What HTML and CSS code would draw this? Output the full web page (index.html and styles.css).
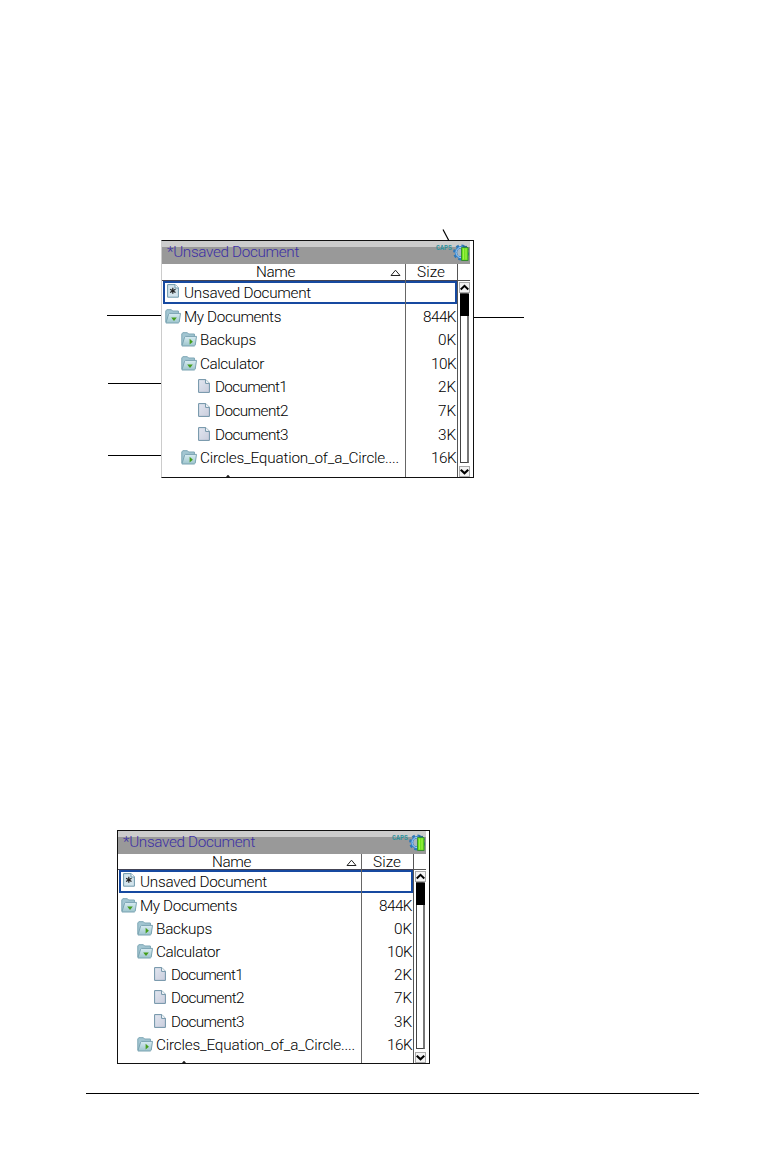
FILE: index.html
```html
<!DOCTYPE html>
<html lang="en">
<head>
<meta charset="utf-8">
<title>Unsaved Document</title>
<link rel="stylesheet" href="styles.css">
</head>
<body>
<svg class="defs" width="0" height="0" aria-hidden="true">
  <defs>
    <linearGradient id="fold" x1="0" y1="0" x2="0" y2="1"><stop offset="0" stop-color="#d9ecf2"/><stop offset="1" stop-color="#9cc4cc"/></linearGradient>
    <linearGradient id="paper" x1="0" y1="0" x2="1" y2="1"><stop offset="0" stop-color="#e2e6f0"/><stop offset="1" stop-color="#c9cddc"/></linearGradient>
    <symbol id="folder" viewBox="0 0 16 15">
      <path d="M.8 13V2L1.8.7h4.6l1.2 1.3h5.8v2.6" fill="#a3c6d2" stroke="#7ca5b4"/>
      <path d="M.9 14 3.6 5.2l.9-.8h11l-1.3 8.8-.9.8z" fill="url(#fold)" stroke="#7aa3b2"/>
    </symbol>
    <symbol id="open" viewBox="0 0 16 15"><use href="#folder"/><path d="M6.2 8.6h5.6L9 12z" fill="#449d1a"/></symbol>
    <symbol id="closed" viewBox="0 0 16 15"><use href="#folder"/><path d="M8.6 6.8v5.8l3.3-2.9z" fill="#449d1a"/></symbol>
    <symbol id="doc" viewBox="0 0 12 14">
      <path d="M.6.6h7.2l3.6 3.6v9.2H.6z" fill="url(#paper)" stroke="#6f92a6"/>
      <path d="M7.6.6v3.8h3.8" fill="#fff" stroke="#6f92a6"/>
    </symbol>
    <symbol id="unsaved" viewBox="0 0 12 14">
      <path d="M.6.6h7.6l3.2 3.2v9.4H.6z" fill="#d3e4ec" stroke="#6e99ac"/>
      <path d="M8 .6v3.4h3.4" fill="#fff" stroke="#6e99ac"/>
      <path d="M5.8 3.8v6M3.1 5.2l5.4 3.2M8.5 5.2 3.1 8.4" stroke="#222" stroke-width="1.2"/>
    </symbol>
    <symbol id="status" viewBox="0 0 16 18">
      <circle cx="8.2" cy="8.5" r="7" fill="none" stroke="#2e78b8" stroke-width="2.2" stroke-dasharray="2.9 2.6"/>
      <circle cx="8.2" cy="8.5" r="5.2" fill="#a9b6c0" stroke="#2f7cc4" stroke-width="2.4"/>
      <circle cx="8.2" cy="8.5" r="5.2" fill="none" stroke="#a5d6ff" stroke-width="1"/>
      <path d="M8.5 4.5v-1h6.6v13H8.5z" fill="#6be11c" stroke="#2f8a2a" stroke-width=".9"/>
      <path d="M10.6 4.5v11M13 4.5v11" stroke="#a8f250"/>
      <path d="M10 2.6h4" stroke="#2a6f86" stroke-width="1.4"/>
    </symbol>
    <symbol id="up" viewBox="0 0 10 10"><path d="M.8 7.2 5 3.2 9.2 7.2" fill="none" stroke="#000" stroke-width="2.2"/></symbol>
    <symbol id="down" viewBox="0 0 10 10"><path d="M.8 3 5 7 9.2 3" fill="none" stroke="#000" stroke-width="2.5"/></symbol>
  </defs>
</svg>
<main class="page">
  <figure class="figure figure-first">
    <div class="screen"></div>
    <i class="line line-a"></i><i class="line line-b"></i><i class="line line-c"></i><i class="line line-d"></i>
    <svg class="pointer" width="8" height="12" viewBox="0 0 8 12"><path d="M1 .5 6.8 11.5" stroke="#000" stroke-width="1.2"/></svg>
  </figure>
  <figure class="figure figure-second"><div class="screen"></div></figure>
  <hr class="rule">
</main>
<script src="screen.js"></script>
</body>
</html>
```
FILE: styles.css
```css
* { box-sizing: border-box; }
body { margin: 0; background: #fff; }
.defs { position: absolute; }
.page { width: 764px; height: 1160px; overflow: hidden; display: flex; flex-direction: column; }
.figure { margin: 0; position: relative; width: 313px; flex: none; }
.figure-first { --row: 23.55px; --head: 17px; height: 238px; margin: 240px 0 0 161px; }
.figure-second { --row: 23.2px; --head: 16px; height: 234px; margin: 352px 0 0 117px; }
.rule { margin: 29px 65px 0 86px; border: 0; height: 1px; background: #000; flex: none; }
.screen { height: 100%; border: 1px solid #111; display: flex; flex-direction: column; overflow: hidden; font: 300 15.3px/20px Roboto, "Liberation Sans", sans-serif; color: #000; }
.figure-first .screen { border-left-color: #ccc; }
.titlebar { height: 23px; flex: none; margin-right: 3px; padding: 0 1px 0 5px; display: flex; background: linear-gradient(#ccc 6px, #999 6px); color: #3c2fa5; }
.title { flex: 1; padding-top: 1px; }
.caps { font: 700 6.5px/7px "Liberation Mono", monospace; letter-spacing: .1px; color: #2f929c; padding-top: 4px; margin-right: 1px; }
.status { width: 16px; height: 18px; margin-top: 3px; }
.body { flex: 1; min-height: 0; display: flex; }
.table { width: 296px; flex: none; position: relative; border-right: 1px solid #555; }
.head { height: var(--head); display: grid; grid-template-columns: 243px 52px; border-bottom: 1px solid #445; line-height: 16px; }
.head-name { display: flex; padding-left: 94px; }
.sort { margin: 5px 0 0 auto; margin-right: 4px; width: 11px; height: 8px; }
.head-size { padding-left: 12px; }
.row { height: var(--row); display: flex; align-items: center; padding: 2px 1px 0 3px; }
.row.selected { height: 23px; margin-left: 1px; border: 2px solid #1649a0; padding: 1px 0 0 2px; }
.icon { flex: none; width: 16px; height: 15px; margin-right: 3px; margin-top: -1px; }
.icon.doc { width: 12px; height: 14px; margin-right: 5px; margin-top: -2px; }
.icon.unsaved { width: 12px; height: 14px; margin-right: 5px; margin-top: -4px; }
.row.level-1 { padding-left: 19px; }
.row.level-2 { padding-left: 36px; }
.name { flex: 1; white-space: nowrap; }
.divider { position: absolute; left: 243px; top: 0; bottom: 0; width: 1px; background: #666; }
.t { display: inline-block; white-space: nowrap; }
.scroll { width: 12px; display: flex; flex-direction: column; align-items: center; }
.corner { width: 12px; height: var(--head); flex: none; border-bottom: 1px solid #555; }
.button { width: 11px; height: 11px; flex: none; border: 1px solid #aaa; background: #f3f3f3; margin-top: 1px; }
.button svg { display: block; width: 9px; height: 9px; }
.track { flex: 1; width: 9px; margin: 0 0 2px; border: 1px solid #444; border-right: 2px solid #777; }
.thumb { width: 9px; height: 22px; margin: 0 -1px; background: #000; }
.peek { width: 4px; height: 2px; margin-left: 64px; background: #222; clip-path: polygon(40% 0, 60% 0, 100% 100%, 0 100%); position: absolute; bottom: 0; }
.line { position: absolute; height: 1px; background: #000; }
.line-a { left: -54px; top: 75px; width: 54px; }
.line-b { left: -53px; top: 143px; width: 53px; }
.line-c { left: -53px; top: 215px; width: 53px; }
.line-d { left: 313px; top: 77px; width: 50px; }
.pointer { position: absolute; left: 281px; top: -11px; }
```
FILE: screen.js
```js
// Each entry: icon, indent level, label, label width in px, size, size width in px.
const rows = [
  ['unsaved', 0, 'Unsaved Document', 127, '', 0],
  ['open', 0, 'My Documents', 97, '844K', 33],
  ['closed', 1, 'Backups', 56, '0K', 18],
  ['open', 1, 'Calculator', 64, '10K', 25],
  ['doc', 2, 'Document1', 72, '2K', 18],
  ['doc', 2, 'Document2', 73, '7K', 18],
  ['doc', 2, 'Document3', 73, '3K', 18],
  ['closed', 1, 'Circles_Equation_of_a_Circle....', 199, '16K', 25],
];
const icon = (id, cls) => `<svg class="${cls}"><use href="#${id}"/></svg>`;
const text = (s, w) => `<span class="t" data-w="${w}">${s}</span>`;

const html = `
<div class="titlebar"><span class="title">${text('*Unsaved Document', 132)}</span><span class="caps">CAPS</span>${icon('status', 'status')}</div>
<div class="body">
  <div class="table">
    <div class="head"><div class="head-name">${text('Name', 39)}
      <svg class="sort" viewBox="0 0 11 8"><path d="M1 6.5h9L5.5 1.2z" fill="#fff" stroke="#222"/></svg></div>
      <div class="head-size">${text('Size', 28)}</div></div>
    ${rows.map((r, i) => `<div class="row level-${r[1]} ${i ? '' : 'selected'}">${icon(r[0], 'icon ' + r[0])}<span class="name">${text(r[2], r[3])}</span>${r[4] ? text(r[4], r[5]) : ''}</div>`).join('')}
    <i class="divider"></i><i class="peek"></i>
  </div>
  <div class="scroll"><div class="corner"></div>
    <div class="button">${icon('up', '')}</div>
    <div class="track"><div class="thumb"></div></div>
    <div class="button">${icon('down', '')}</div>
  </div>
</div>`;
document.querySelectorAll('.screen').forEach(el => { el.innerHTML = html; });

// Track each label so that it fills its set width.
document.querySelectorAll('.t').forEach(el => {
  const gap = (el.dataset.w - el.getBoundingClientRect().width) / el.textContent.length;
  el.style.letterSpacing = gap.toFixed(3) + 'px';
});
```
